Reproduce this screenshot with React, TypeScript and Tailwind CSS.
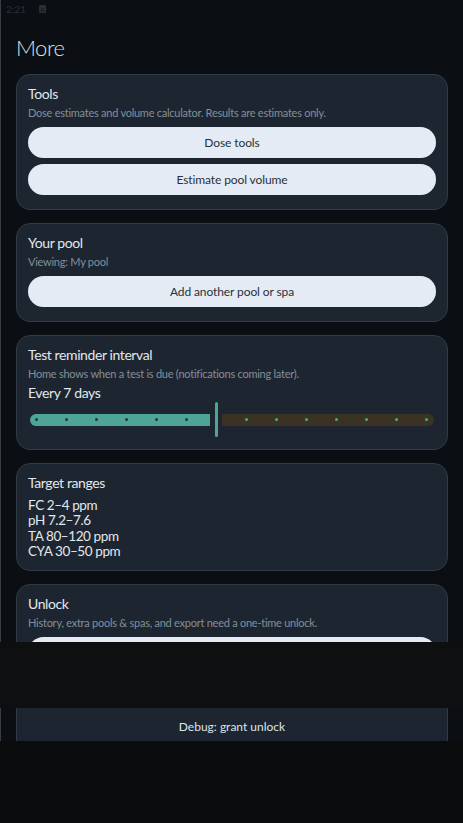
import React from "react";

const font = { fontFamily: "Lato, 'Noto Sans', sans-serif" };

function Card({ children, pb = "pb-[14px]" }: { children: React.ReactNode; pb?: string }) {
  return (
    <div className={"rounded-[14px] border border-[#313b46] bg-[#1d2630] px-[11px] pt-[10px] " + pb}>
      {children}
    </div>
  );
}

function Title({ children }: { children: React.ReactNode }) {
  return <div className="text-[14px] leading-[18px] tracking-[-0.4px] text-[#e3e7ec]">{children}</div>;
}

function Sub({ children }: { children: React.ReactNode }) {
  return <div className="mt-[3px] text-[11px] leading-[14px] tracking-[-0.25px] text-[#858e98]">{children}</div>;
}

function Btn({ children }: { children: React.ReactNode }) {
  return (
    <button className="flex h-[31px] w-full items-center justify-center rounded-full bg-[#e4ebf5] text-[12px] tracking-[-0.1px] text-[#2b3038]">
      {children}
    </button>
  );
}

function Slider() {
  const left = [0, 1, 2, 3, 4, 5];
  const right = [0, 1, 2, 3, 4, 5, 6];
  return (
    <div className="flex h-[35px] items-center">
      <div className="ml-[2px] flex h-[12px] w-[180px] items-center gap-[27px] rounded-l-full rounded-r-[2px] bg-[#4fa595] pl-[5px]">
        {left.map((i) => (
          <span key={i} className="h-[3px] w-[3px] rounded-full bg-[#1d3a36]" />
        ))}
      </div>
      <div className="ml-[5px] h-[35px] w-[3px] rounded-full bg-[#4fa595]" />
      <div className="ml-[4px] flex h-[12px] w-[212px] items-center gap-[27px] rounded-l-[2px] rounded-r-full bg-[#3b3224] pl-[23px]">
        {right.map((i) => (
          <span key={i} className="h-[3px] w-[3px] rounded-full bg-[#4fa595]" />
        ))}
      </div>
    </div>
  );
}

export default function App() {
  return (
    <div style={font} className="relative h-[823px] w-[463px] overflow-hidden bg-[#0b0e12]">
      <div className="h-[741px] border-l border-[#3a3e43]">
        <div className="flex h-[18px] items-center gap-[13px] pl-[5px] text-[10px] text-[#2b2f34]">
          <span>2:21</span>
          <span className="flex h-[8px] w-[7px] items-center justify-center rounded-[1px] bg-[#2b2f34] text-[6px] text-[#0b0e12]">A</span>
        </div>
        <div className="pl-[15px] pt-[17px] text-[22px] font-light leading-[26px] tracking-[-0.5px] text-[#dfe4ea]">More</div>
        <div className="mt-[13px] flex flex-col gap-[13px] pl-[15px] pr-[15px]">
          <Card>
            <Title>Tools</Title>
            <Sub>Dose estimates and volume calculator. Results are estimates only.</Sub>
            <div className="mt-[7px] flex flex-col gap-[6px]">
              <Btn>Dose tools</Btn>
              <Btn>Estimate pool volume</Btn>
            </div>
          </Card>
          <Card>
            <Title>Your pool</Title>
            <Sub>Viewing: My pool</Sub>
            <div className="mt-[7px]">
              <Btn>Add another pool or spa</Btn>
            </div>
          </Card>
          <Card pb="pb-[12px]">
            <Title>Test reminder interval</Title>
            <Sub>Home shows when a test is due (notifications coming later).</Sub>
            <div className="mt-[3px] text-[14px] leading-[18px] tracking-[-0.4px] text-[#e3e7ec]">Every 7 days</div>
            <Slider />
          </Card>
          <Card pb="pb-[10px]">
            <Title>Target ranges</Title>
            <div className="mt-[6px] text-[13.5px] leading-[15.4px] tracking-[-0.4px] text-[#e3e7ec]">
              <div>FC 2–4 ppm</div>
              <div>pH 7.2–7.6</div>
              <div>TA 80–120 ppm</div>
              <div>CYA 30–50 ppm</div>
            </div>
          </Card>
          <Card>
            <Title>Unlock</Title>
            <Sub>History, extra pools &amp; spas, and export need a one-time unlock.</Sub>
            <div className="mt-[7px] flex flex-col gap-[6px]">
              <Btn>Unlock</Btn>
              <Btn>Restore purchase</Btn>
              <div className="flex h-[33px] items-center justify-center text-[12px] text-[#dde3ea]">Debug: grant unlock</div>
            </div>
          </Card>
        </div>
      </div>
      <div className="absolute left-0 top-[642px] h-[66px] w-full bg-[#0e0f10]" />
      <div className="absolute left-0 top-[741px] h-[82px] w-full bg-[#0b0c0e]" />
    </div>
  );
}
